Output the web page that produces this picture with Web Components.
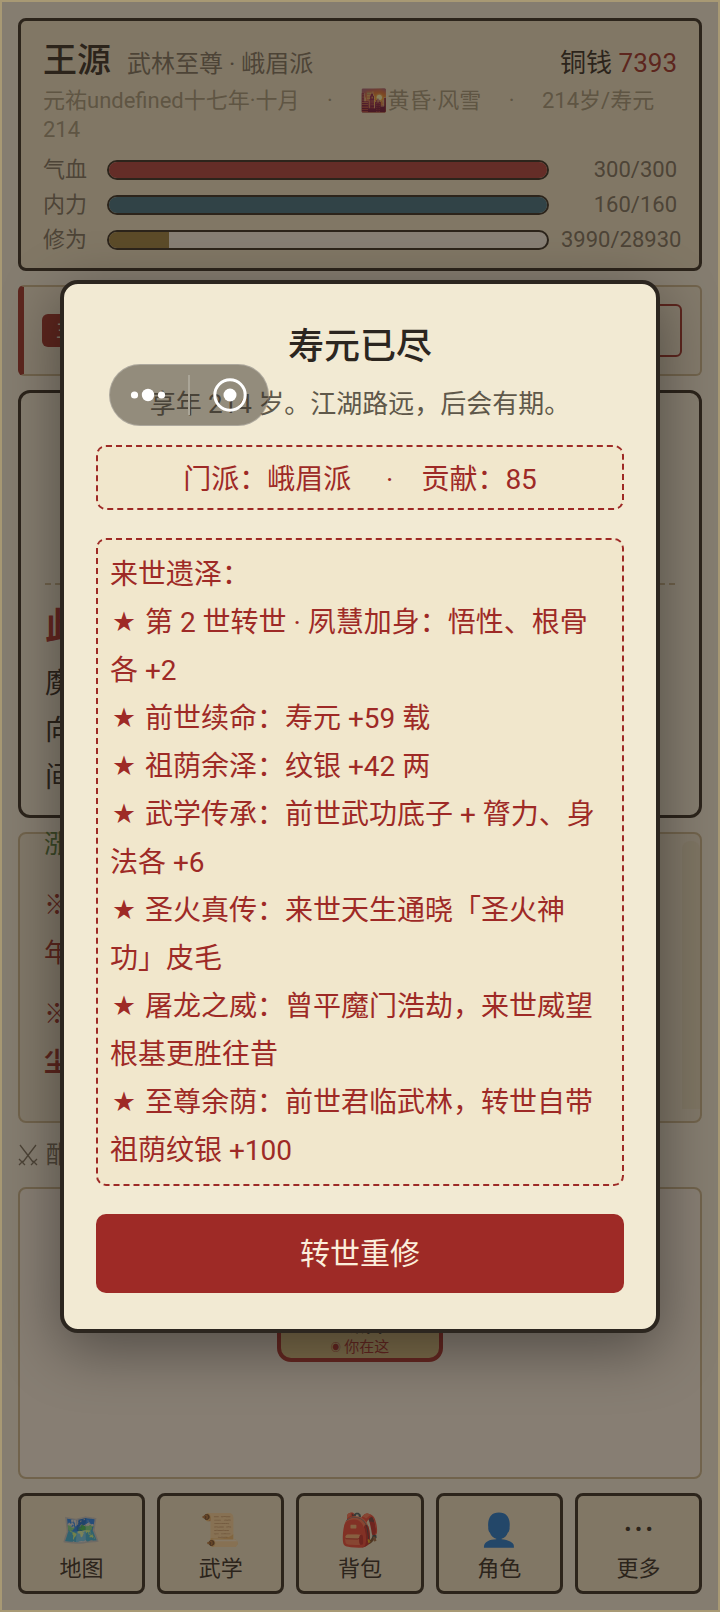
<!DOCTYPE html>
<html lang="zh-CN">
<head>
<meta charset="utf-8">
<meta name="viewport" content="width=device-width, initial-scale=1">
<title>江湖</title>
<style>
  html {
    --ink: #2c261f; --paper: #f1e6ca; --sheet: #f2ead3; --page: #fbf3e4; --white: #fff8ee;
    --red: #9e2a26; --line: #cbb88f; --muted: #796f5f; --hint: #a2967c;
    font-family: Roboto, "Noto Sans CJK SC", "Noto Color Emoji", sans-serif;
    color: var(--ink);
  }
  body { margin: 0; }
</style>
</head>
<body>
<game-shell>
  <status-card>
    <stat-bar label="气血" value="300" max="300" style="--fill:#ae3b3a"></stat-bar>
    <stat-bar label="内力" value="160" max="160" style="--fill:#386e85"></stat-bar>
    <stat-bar label="修为" value="3990" max="28930" style="--fill:#9c7f3f"></stat-bar>
  </status-card>
  <quest-card>主</quest-card>
  <scene-card>
    <span slot="title">此</span>
    <p>魔</p><p>向</p><p>间</p>
  </scene-card>
  <event-log></event-log>
  <map-panel></map-panel>
  <bottom-nav>
    <nav-item icon="🗺️">地图</nav-item>
    <nav-item icon="📜">武学</nav-item>
    <nav-item icon="🎒">背包</nav-item>
    <nav-item icon="👤">角色</nav-item>
    <nav-item icon="⋯">更多</nav-item>
  </bottom-nav>
  <rebirth-dialog slot="overlay"></rebirth-dialog>
  <mini-capsule slot="overlay"></mini-capsule>
</game-shell>

<script>
const define = (name, html, setup) => {
  const tpl = document.createElement('template');
  tpl.innerHTML = '<style>*{box-sizing:border-box}p,h1,h2{margin:0}button{font:inherit;color:inherit;margin:0}:host{display:block;box-sizing:border-box}</style>' + html;
  customElements.define(name, class extends HTMLElement {
    constructor() { super(); this.attachShadow({ mode: 'open' }).append(tpl.content.cloneNode(true)); }
    connectedCallback() { if (setup) setup(this, this.shadowRoot); }
  });
};

define('game-shell', `
<style>
  :host { position: relative; border: 2px solid #a89974; background: var(--page); min-height: 100vh; display: flex; }
  main { flex: 1; min-width: 0; padding: 16px; display: flex; flex-direction: column; gap: 14px; }
</style>
<main><slot></slot></main><slot name="overlay"></slot>`);

define('status-card', `
<style>
  :host { border: 3px solid var(--ink); border-radius: 8px; background: var(--paper); padding: 17px 22px 14px; }
  header { display: flex; align-items: baseline; line-height: 44px; }
  h1 { font-size: 34px; font-weight: 500; margin-right: 16px; }
  .rank { font-size: 24px; color: var(--muted); flex: 1; }
  .coin { font-size: 26px; }
  b { font-weight: 400; color: var(--red); }
  .meta { font-size: 22px; line-height: 29px; color: var(--hint); padding-bottom: 11px; }
  .bars { display: grid; gap: 6px; }
</style>
<header><h1>王源</h1><span class="rank">武林至尊 · 峨眉派</span><span class="coin">铜钱 <b>7393</b></span></header>
<p class="meta">元祐undefined十七年·十月　&nbsp;·&nbsp;　🌇黄昏·风雪　&nbsp;·&nbsp;　214岁/寿元214</p>
<div class="bars"><slot></slot></div>`);

define('stat-bar', `
<style>
  :host { display: grid; grid-template-columns: 52px 1fr 116px; gap: 12px; align-items: center; font-size: 22px; line-height: 29px; color: var(--muted); }
  .track { height: 20px; border: 2px solid var(--ink); border-radius: 10px; background: var(--white); overflow: hidden; }
  .fill { height: 100%; background: var(--fill); }
  .num { text-align: right; white-space: nowrap; }
</style>
<span class="label"></span><div class="track"><div class="fill"></div></div><span class="num"></span>`,
(el, r) => {
  const v = el.getAttribute('value'), m = el.getAttribute('max');
  r.querySelector('.label').textContent = el.getAttribute('label');
  r.querySelector('.num').textContent = v + '/' + m;
  r.querySelector('.fill').style.width = (v / m * 100) + '%';
});

define('quest-card', `
<style>
  :host { display: flex; justify-content: space-between; align-items: center; border: 2px solid var(--line); border-left: 6px solid var(--red); border-radius: 6px; background: #f5ecd8; padding: 17px 18px; }
  .tag { background: var(--red); color: var(--paper); border-radius: 6px; font-size: 20px; line-height: 33px; padding: 0 14px; }
  button { width: 100px; height: 53px; border: 2px solid var(--red); border-radius: 6px; background: none; }
</style>
<span class="tag"><slot></slot></span><button aria-label="前往"></button>`);

define('scene-card', `
<style>
  :host { border: 3px solid var(--ink); border-radius: 12px; background: #fbf3e2; padding: 22px 24px 12px; }
  .view { height: 170px; border-bottom: 2px dashed var(--line); }
  h2 { font-size: 36px; line-height: 48px; font-weight: 700; color: #b02e2e; margin: 18px 0 9px; }
  .text { font-size: 28px; line-height: 47px; padding-bottom: 2px; }
  ::slotted(p) { margin: 0; }
</style>
<div class="view"></div><h2><slot name="title"></slot></h2><div class="text"><slot></slot></div>`);

define('event-log', `
<style>
  :host { height: 291px; border: 2px solid var(--line); border-radius: 8px; background: #f2e8d2; display: flex; justify-content: space-between; align-items: flex-start; }
  .lines { font-size: 26px; line-height: 48px; color: var(--red); padding-left: 24px; margin-top: -14px; }
  .good { color: #4f7a3a; }
  .entry { margin-bottom: 13px; }
  .big { font-weight: 700; }
  .bar { width: 18px; height: 268px; margin-top: 7px; border-radius: 8px 8px 0 0; background: #ebe0c6; }
</style>
<div class="lines"><p class="entry good">涨</p><p>※</p><p class="entry">年</p><p class="big">※</p><p class="big">尘</p></div><div class="bar"></div>`);

define('map-panel', `
<style>
  :host { flex: 1; display: flex; flex-direction: column; }
  h2 { font-size: 24px; line-height: 36px; font-weight: 400; color: var(--muted); margin-bottom: 14px; display: flex; align-items: center; gap: 8px; }
  .map { flex: 1; min-height: 288px; border: 2px solid var(--line); border-radius: 8px; background: #fff6e9; display: grid; place-items: center; }
  .node { width: 166px; border: 4px solid #b02e2e; border-radius: 14px; background: #e3c98c; text-align: center; padding-bottom: 1px; font-size: 24px; line-height: 28px; font-weight: 500; }
  small { display: block; font-size: 15px; line-height: 20px; font-weight: 400; color: #b02e2e; }
  .pin { font-size: 10px; vertical-align: 1px; line-height: 10px; }
</style>
<h2><svg width="20" height="24" viewBox="0 0 20 24" fill="none" stroke="currentColor" stroke-width="1.3"><path d="M2 2l13 17M18 2L5 19M1 16l6 6M19 16l-6 6M5 18l-4 4M15 18l4 4"/></svg>酣</h2>
<div class="map"><div class="node">峨眉<small><span class="pin">◉</span> 你在这</small></div></div>`);

define('bottom-nav', `
<style>
  nav { display: grid; grid-template-columns: repeat(5, 1fr); gap: 12px; }
</style>
<nav><slot></slot></nav>`);

define('nav-item', `
<style>
  button { width: 100%; height: 101px; border: 3px solid var(--ink); border-radius: 8px; background: var(--paper); display: flex; flex-direction: column; align-items: center; padding: 12px 0; }
  .icon { font-size: 32px; line-height: 44px; }
  .label { font-size: 22px; line-height: 30px; padding-top: 2px; }
</style>
<button><span class="icon"></span><span class="label"><slot></slot></span></button>`,
(el, r) => { r.querySelector('.icon').textContent = el.getAttribute('icon'); });

define('rebirth-dialog', `
<style>
  :host { position: absolute; inset: 0; background: rgba(44,36,24,.57); display: grid; place-items: center; align-content: center; grid-template-columns: minmax(0, 600px); justify-content: center; }
  section { width: 100%; border: 4px solid var(--ink); border-radius: 18px; background: var(--sheet); padding: 36px 32px; box-shadow: 0 16px 60px rgba(0,0,0,.4); text-align: center; }
  h2 { font-size: 36px; line-height: 54px; font-weight: 500; margin-bottom: 11px; }
  .sub { font-size: 26px; line-height: 38px; color: #5f584a; margin-bottom: 22px; }
  .box { border: 2px dashed var(--red); border-radius: 10px; background: #f1e7cc; color: var(--red); font-size: 28px; margin-bottom: 28px; }
  .sect { line-height: 45px; padding: 10px 12px 6px; }
  .legacy { line-height: 48px; padding: 11px 12px 9px; text-align: left; }
  .star { padding: 0 3px; font-size: 22px; line-height: 22px; vertical-align: 3px; }
  button { display: block; width: 100%; height: 79px; border: 0; border-radius: 10px; background: var(--red); color: #fbeedb; font-size: 30px; padding-bottom: 5px; }
</style>
<section role="dialog" aria-labelledby="t">
  <h2 id="t">寿元已尽</h2>
  <p class="sub">享年 214 岁。江湖路远，后会有期。</p>
  <div class="box sect">门派：峨眉派　&nbsp;·　贡献：85</div>
  <div class="box legacy">
    <p>来世遗泽：</p>
    <p><span class="star">★</span> 第 2 世转世 · 夙慧加身：悟性、根骨<wbr>各 +2</p>
    <p><span class="star">★</span> 前世续命：寿元 +59 载</p>
    <p><span class="star">★</span> 祖荫余泽：纹银 +42 两</p>
    <p><span class="star">★</span> 武学传承：前世武功底子 + 膂力、身<wbr>法各 +6</p>
    <p><span class="star">★</span> 圣火真传：来世天生通晓「圣火神<br>功」皮毛</p>
    <p><span class="star">★</span> 屠龙之威：曾平魔门浩劫，来世威望<wbr>根基更胜往昔</p>
    <p><span class="star">★</span> 至尊余荫：前世君临武林，转世自带<wbr>祖荫纹银 +100</p>
  </div>
  <button>转世重修</button>
</section>`);

define('mini-capsule', `
<style>
  :host { position: absolute; top: 362px; left: 107px; }
  div { width: 160px; height: 62px; border-radius: 31px; border: 1px solid rgba(255,255,255,.25); background: rgba(51,45,38,.5); }
  svg { display: block; }
</style>
<div><svg width="158" height="60" viewBox="0 0 158 60" fill="#fff">
  <circle cx="24.500" cy="30" r="3.600"/><circle cx="38" cy="30" r="6.200"/><circle cx="51.500" cy="30" r="3.600"/>
  <path d="M78 10h2v40h-2z" fill="#aaa597"/>
  <circle cx="120" cy="30" r="15.200" fill="none" stroke="#fff" stroke-width="3"/><circle cx="120" cy="30" r="6.500"/>
</svg></div>`);
</script>
</body>
</html>
